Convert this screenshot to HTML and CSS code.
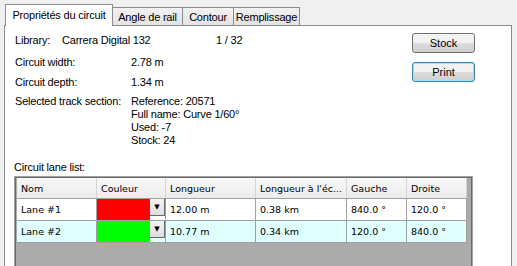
FILE: index.html
```html
<!DOCTYPE html>
<html lang="fr">
  <head>
    <meta charset="UTF-8" />
    <title>Circuit</title>
    <link rel="stylesheet" href="styles.css">
  </head>
  <body>
    <div class="tabs">
      <div class="tab active">Propriétés du circuit</div>
      <div class="tab">Angle de rail</div>
      <div class="tab">Contour</div>
      <div class="tab">Remplissage</div>
    </div>
    <div class="panel">
      <div class="top">
        <div class="info">
          <div class="lib-row">
            <span class="lib-label">Library:</span>
            <span class="lib-name">Carrera Digital 132</span>
            <span class="lib-count">1 / 32</span>
          </div>
          <div class="row width"><span class="label">Circuit width:</span><span>2.78 m</span></div>
          <div class="row"><span class="label">Circuit depth:</span><span>1.34 m</span></div>
          <div class="row section">
            <span class="label">Selected track section:</span>
            <div class="lines">
              <div>Reference: 20571</div>
              <div>Full name: Curve 1/60°</div>
              <div>Used: -7</div>
              <div>Stock: 24</div>
            </div>
          </div>
        </div>
        <div class="buttons">
          <button>Stock</button>
          <button class="default">Print</button>
        </div>
      </div>
      <div class="list-title">Circuit lane list:</div>
      <div class="grid">
        <table>
          <tr class="head">
            <td class="c-nom">Nom</td>
            <td class="c-col">Couleur</td>
            <td class="c-len">Longueur</td>
            <td class="c-scale">Longueur à l'éc...</td>
            <td class="c-ang">Gauche</td>
            <td class="c-ang">Droite</td>
          </tr>
          <tr>
            <td>Lane #1</td>
            <td class="swatch-cell"><div class="swatch"><span class="fill red"></span><span class="drop">&#9660;</span></div></td>
            <td>12.00 m</td>
            <td>0.38 km</td>
            <td>840.0 °</td>
            <td>120.0 °</td>
          </tr>
          <tr class="alt">
            <td>Lane #2</td>
            <td class="swatch-cell"><div class="swatch"><span class="fill green"></span><span class="drop">&#9660;</span></div></td>
            <td>10.77 m</td>
            <td>0.34 km</td>
            <td>120.0 °</td>
            <td>840.0 °</td>
          </tr>
        </table>
      </div>
    </div>
  </body>
</html>
```

FILE: styles.css
```css
body {
  margin: 0;
  background-color: #f0f0f0;
  font-family: "Liberation Sans", Arial, sans-serif;
  font-size: 11px;
  letter-spacing: -0.2px;
  color: #000;
  height: 266px;
  overflow: hidden;
  white-space: nowrap;
}

.tabs {
  display: flex;
  align-items: flex-end;
  padding-left: 5px;
  height: 25px;
}

.tab {
  height: 18px;
  line-height: 18px;
  border: 1px solid #898c95;
  border-bottom: none;
  border-left: none;
  background: linear-gradient(#f2f2f2, #e3e3e3);
  text-align: center;
  box-sizing: border-box;
}

.tab:nth-child(2) { width: 70px; }
.tab:nth-child(3) { width: 51px; }
.tab:nth-child(4) { width: 66px; }

.tab.active {
  height: 22px;
  line-height: 21px;
  width: 108px;
  background: #fff;
  border-left: 1px solid #898c95;
  margin-bottom: -1px;
  position: relative;
  z-index: 1;
}

.panel {
  margin-left: 4px;
  width: 508px;
  height: 241px;
  background-color: #fff;
  border: 1px solid #898c95;
  border-bottom: none;
  padding: 0 0 0 9px;
  box-sizing: border-box;
  overflow: hidden;
}

.top {
  display: flex;
  justify-content: space-between;
}

.info {
  padding-top: 5px;
  padding-left: 1px;
}

.lib-row {
  display: flex;
  height: 18px;
  line-height: 18px;
}

.lib-label { width: 47px; }
.lib-name { width: 154px; }

.row {
  display: flex;
  margin-top: 2px;
  height: 18px;
  line-height: 18px;
}

.row.width {
  margin-top: 4px;
}

.label {
  width: 116px;
}

.section {
  height: auto;
  line-height: 13px;
  margin-top: 4px;
}

.buttons {
  display: flex;
  flex-direction: column;
  gap: 9px;
  padding-top: 7px;
  margin-right: 36px;
}

.buttons button {
  width: 63px;
  height: 20px;
  font-family: "Liberation Sans", Arial, sans-serif;
  font-size: 11px;
  border: 1px solid #707070;
  border-radius: 3px;
  background: linear-gradient(#f2f2f2 50%, #dddddd 50%, #cfcfcf);
  padding: 0;
}

.buttons button.default {
  border-color: #3c7fb1;
  box-shadow: inset 0 0 0 1px #9ee0f5;
}

.list-title {
  margin-top: 13px;
  height: 14px;
  line-height: 14px;
}

.grid {
  width: 459px;
  height: 100px;
  background-color: #ababab;
  border: 1px solid #a0a0a0;
  box-shadow: inset 0 0 0 1px #696969;
  padding: 1px 0 0 1px;
  box-sizing: border-box;
  margin-top: 2px;
}

.grid table {
  border-collapse: collapse;
  font-family: "DejaVu Sans", Tahoma, sans-serif;
  font-size: 9.5px;
  letter-spacing: 0;
  table-layout: fixed;
  width: 450px;
  margin-left: 1px;
}

.grid td {
  height: 21px;
  padding: 0 0 0 4px;
  border: 1px solid #a0a0a0;
  background-color: #fff;
  overflow: hidden;
}

.grid tr.head td {
  height: 20px;
  border-top: none;
  background: linear-gradient(#f7f7f7, #ececec);
  border-color: #d5d5d5;
  border-bottom-color: #a0a0a0;
}

.grid td:first-child { border-left: none; }

.grid tr.alt td {
  background-color: #e0ffff;
}

.c-nom { width: 75px; }
.c-col { width: 64px; }
.c-len { width: 85px; }
.c-scale { width: 86px; }
.c-ang { width: 55px; }

.grid td.swatch-cell {
  padding: 0;
}

.swatch {
  display: flex;
  height: 21px;
}

.swatch .fill {
  flex: 1;
}

.fill.red { background-color: #ff0000; }
.fill.green { background-color: #00ff00; }

.swatch .drop {
  width: 15px;
  height: 17px;
  font-size: 7px;
  line-height: 16px;
  text-align: center;
  background: linear-gradient(#f4f4f4, #dcdcdc);
  border-right: 1px solid #696969;
  border-bottom: 1px solid #696969;
  box-sizing: border-box;
}
```
